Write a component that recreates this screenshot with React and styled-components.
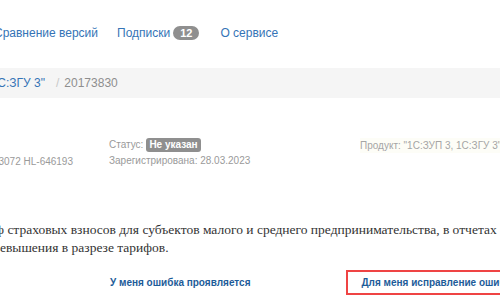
import styled, { createGlobalStyle } from "styled-components";

const Global = createGlobalStyle`
    html, body {
        margin: 0;
        padding: 0;
        background: #fff;
        overflow: hidden;
    }
    body {
        width: 500px;
        height: 300px;
        font-family: "Liberation Sans", Arial, sans-serif;
    }
`

export default function App(){
    return (
        <Page>
            <Global />
            <Header>
                <Clip $w={98}>
                    <NavLink>Сравнение версий</NavLink>
                </Clip>
                <NavLink>
                    Подписки <Count>12</Count>
                </NavLink>
                <NavLink>О сервисе</NavLink>
            </Header>

            <Crumbs>
                <Clip $w={45}>
                    <CrumbLink>"1С:ЗУП 3, 1С:ЗГУ 3"</CrumbLink>
                </Clip>
                <Sep>/</Sep>
                <Current>20173830</Current>
            </Crumbs>

            <Info>
                <Clip $w={73} className="number">
                    <Muted>Номер: 10183072 HL-646193</Muted>
                </Clip>
                <StatusCol>
                    <Line>
                        <Muted>Статус:</Muted>
                        <StatusBadge>Не указан</StatusBadge>
                    </Line>
                    <Line>
                        <Muted>Зарегистрирована: 28.03.2023</Muted>
                    </Line>
                </StatusCol>
                <Product>Продукт: "1С:ЗУП 3, 1С:ЗГУ 3"</Product>
            </Info>

            <Description>
                <TextRow>
                    <Clip $w={4}>Неверно заполняется тариф</Clip>
                    <span>&nbsp;страховых взносов для субъектов малого и среднего предпринимательства, в отчетах</span>
                </TextRow>
                <TextRow>
                    <Clip $w={0}>сумм с пр</Clip>
                    <span>евышения в разрезе тарифов.</span>
                </TextRow>
            </Description>

            <Actions>
                <ActionLink>У меня ошибка проявляется</ActionLink>
                <Highlight>
                    <ActionLink>Для меня исправление ошибки неактуально</ActionLink>
                </Highlight>
            </Actions>
        </Page>
    )
}

const Page = styled.div`
    width: 500px;
    height: 300px;
    overflow: hidden;
    display: flex;
    flex-direction: column;
`

const Clip = styled.div`
    display: flex;
    justify-content: flex-end;
    flex: none;
    width: ${p => p.$w}px;
    white-space: nowrap;
`

const Header = styled.div`
    height: 68px;
    display: flex;
    align-items: center;
    gap: 19px;
    padding-bottom: 2px;
    box-sizing: border-box;
    flex: none;

    & > *:last-child {
        margin-left: 2px;
    }
`

const NavLink = styled.span`
    font-size: 12px;
    color: #3574b6;
    display: flex;
    align-items: center;
    gap: 3px;
    white-space: nowrap;
`

const Count = styled.span`
    display: inline-block;
    background: #8f8f8f;
    color: #fff;
    font-size: 11px;
    font-weight: 700;
    line-height: 14px;
    padding: 0 7px;
    border-radius: 8px;
`

const Crumbs = styled.div`
    height: 30px;
    background: #f5f5f5;
    display: flex;
    align-items: center;
    font-size: 12px;
    flex: none;
`

const CrumbLink = styled.span`
    color: #3574b6;
`

const Sep = styled.span`
    color: #c8c8c8;
    margin: 0 5px 0 11px;
`

const Current = styled.span`
    color: #8e8e8e;
`

const Info = styled.div`
    display: flex;
    align-items: flex-start;
    margin-top: 39px;
    height: 32px;
    font-size: 10px;
    flex: none;

    .number {
        align-self: flex-end;
        margin-right: 36px;
        margin-bottom: 2px;
    }
`

const Muted = styled.span`
    color: #9a9a9a;
`

const StatusCol = styled.div`
    display: flex;
    flex-direction: column;
    gap: 1px;
    width: 251px;
    flex: none;
`

const Line = styled.div`
    display: flex;
    align-items: center;
    gap: 3px;
    height: 15px;
`

const StatusBadge = styled.span`
    background: #8f8f8f;
    color: #fff;
    font-weight: 700;
    font-size: 10px;
    line-height: 14px;
    padding: 0 3px;
    border-radius: 3px;
`

const Product = styled.span`
    color: #a5a5a5;
    white-space: nowrap;
    background: #fdfdf7;
    padding: 2px 0;
    margin-top: 1px;
    flex: none;
`

const Description = styled.div`
    margin-top: 52px;
    font-family: "Liberation Serif", "Times New Roman", serif;
    font-size: 13.5px;
    line-height: 18px;
    color: #333;
    flex: none;
`

const TextRow = styled.div`
    display: flex;
    white-space: nowrap;
`

const Actions = styled.div`
    display: flex;
    align-items: center;
    margin-top: 13px;
    padding-left: 110px;
    gap: 96px;
    flex: none;
`

const ActionLink = styled.span`
    font-size: 10px;
    font-weight: 700;
    color: #1d5c99;
    white-space: nowrap;
`

const Highlight = styled.div`
    border: 2px solid #ef4444;
    padding: 4px 13px;
    height: 13px;
    display: flex;
    align-items: center;
    flex: none;
`
